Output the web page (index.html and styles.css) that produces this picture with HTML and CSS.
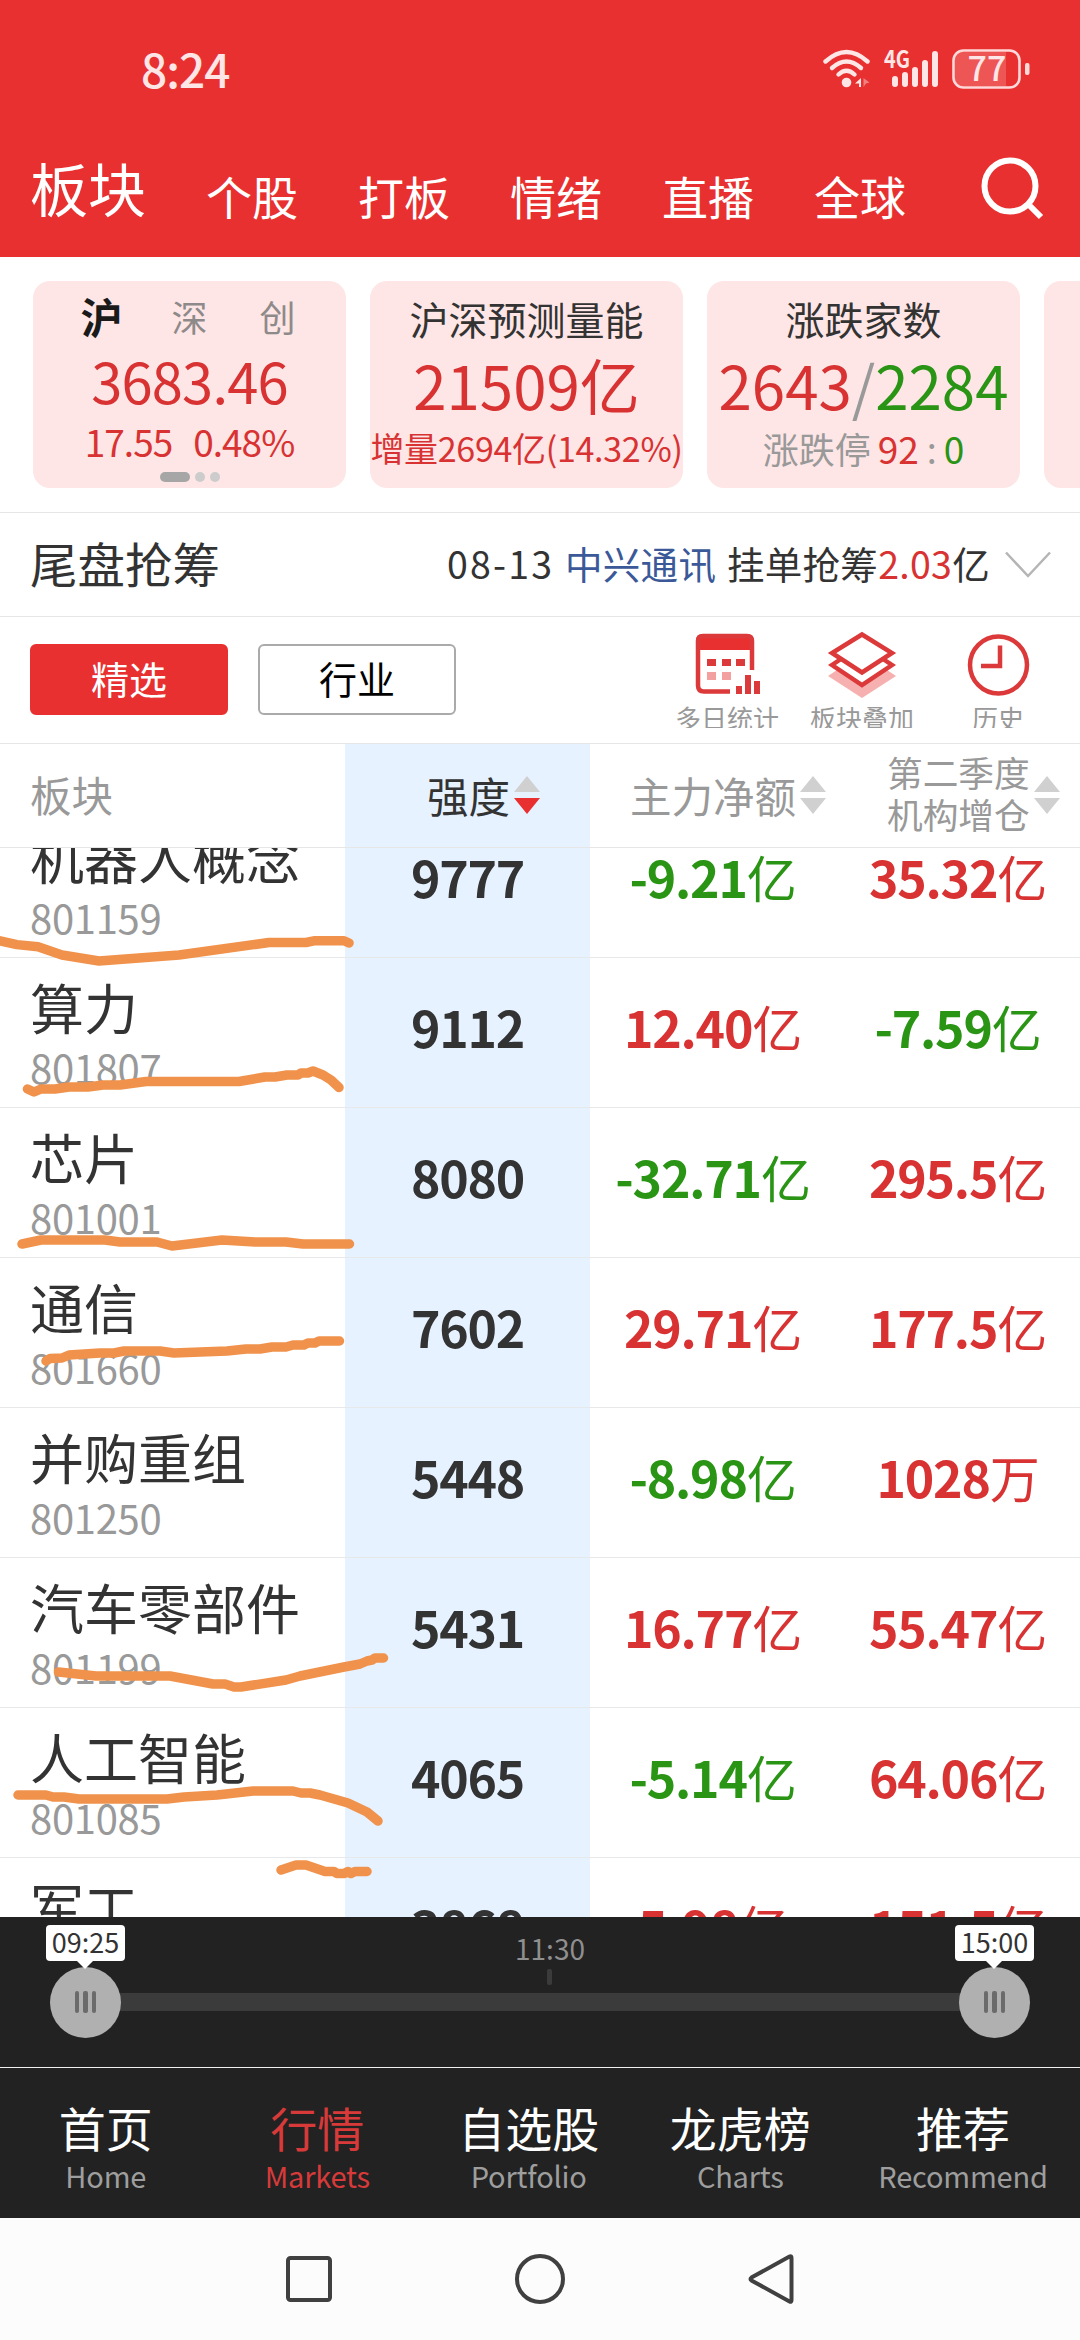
FILE: index.html
```html
<!DOCTYPE html>
<html lang="zh-CN">
<head>
    <meta charset="UTF-8">
    <meta name="viewport" content="width=device-width, initial-scale=1.0">
    <title>板块</title>
    <link rel="stylesheet" href="styles.css">
</head>
<body>
    <div class="header">
        <div class="status">
            <span class="time">8:24</span>
            <svg class="wifi" width="50" height="40" viewBox="0 0 50 40">
                <g fill="none" stroke="#ffe6e6" stroke-width="4.4" stroke-linecap="round">
                    <path d="M3.500 12.500Q24.500-6.500 45.500 12.500"/>
                    <path d="M10 19Q24.500 6 39 19"/>
                    <path d="M16.500 25.500Q24.500 18 32.500 25.500"/>
                </g>
                <circle cx="24.500" cy="33.500" r="4.800" fill="#ffe6e6"/>
                <path d="M39 29v9h-2v-3.500h-4z" fill="#ffe6e6"/>
                <path d="M41.500 29l6 4.500-3.500 1-2.500 3.500z" fill="#f08080"/>
            </svg>
            <svg class="signal" width="56" height="40" viewBox="0 0 56 40">
                <text x="0" y="19" class="net" textLength="26" lengthAdjust="spacingAndGlyphs">4G</text>
                <g stroke="#ffe6e6" stroke-width="6" stroke-linecap="round">
                    <path d="M11 30v5M21 26v9M31 21v14M41 14v21M51 5v30"/>
                </g>
            </svg>
            <svg class="battery" width="79" height="40" viewBox="0 0 79 40">
                <path d="M10 3h44v34H10q-7 0-7-7V10q0-7 7-7z" fill="#ee5656"/>
                <rect x="1.500" y="1.500" width="66" height="37" rx="10" fill="none" stroke="#ffd9d9" stroke-width="2.600"/>
                <rect x="73" y="14" width="4.500" height="12" rx="2" fill="#ffd9d9"/>
                <text x="35" y="32" class="level">77</text>
            </svg>
        </div>
        <div class="tabs">
            <span class="tab active">板块</span>
            <span class="tab">个股</span>
            <span class="tab">打板</span>
            <span class="tab">情绪</span>
            <span class="tab">直播</span>
            <span class="tab">全球</span>
            <svg class="search" width="64" height="64" viewBox="0 0 64 64" fill="none" stroke="#fff" stroke-width="6">
                <circle cx="29" cy="29" r="25.500"/>
                <path d="M47 47l13 13"/>
            </svg>
        </div>
    </div>

    <div class="cards">
        <div class="card">
            <div class="markets"><b>沪</b><span>深</span><span>创</span></div>
            <div class="index red">3683.46</div>
            <div class="change red"><span>17.55</span><span>0.48%</span></div>
            <div class="dots"><i class="on"></i><i></i><i></i></div>
        </div>
        <div class="card">
            <div class="title">沪深预测量能</div>
            <div class="big red">21509亿</div>
            <div class="sub red">增量2694亿(14.32%)</div>
        </div>
        <div class="card">
            <div class="title">涨跌家数</div>
            <div class="big"><span class="red">2643</span><span class="slash">/</span><span class="green">2284</span></div>
            <div class="limit">涨跌停<b class="red">92</b><i>:</i><b class="green">0</b></div>
        </div>
        <div class="card"></div>
    </div>

    <div class="news">
        <span class="news-title">尾盘抢筹</span>
        <span class="news-text"><span class="date">08-13</span> <span class="blue">中兴通讯</span> 挂单抢筹<span class="red">2.03</span>亿</span>
        <svg width="46" height="28" viewBox="0 0 46 28" fill="none" stroke="#b5b5b5" stroke-width="2.500">
            <path d="M1 1.500l22 23.500 22-23.500"/>
        </svg>
    </div>

    <div class="tools">
        <button class="btn primary">精选</button>
        <button class="btn">行业</button>
        <div class="tool first">
            <svg width="66" height="66" viewBox="0 0 66 66">
                <path d="M2 18V9q0-7 7-7h44q6 0 6 7v9z" fill="#e83030"/>
                <path d="M36 59.500H10q-6 0-6-6V9q0-5 5-5h44q5 0 5 5v29" fill="none" stroke="#dc3a3a" stroke-width="4.500"/>
                <path d="M13 27h9v7h-9zM28 27h9v7h-9zM42 27h9v7h-9zM42 54h6v8h-6zM51 43h6v19h-6zM60 49h6v13h-6z" fill="#dc3a3a"/>
                <path d="M13 40h9v8h-9zM28 40h9v8h-9z" fill="#f2a0a0"/>
            </svg>
            <span>多日统计</span>
        </div>
        <div class="tool second">
            <svg width="70" height="68" viewBox="0 0 70 68">
                <path d="M1 45l12-8 22 15 22-15 12 8-34 22z" fill="#f7b0b0"/>
                <g stroke="#dc3a3a" stroke-width="4.500" fill="#fff">
                    <path d="M14 28L5 34l30 20 30-20-9-6"/>
                    <path d="M35 3.500L65 22 35 41.500 5 22z"/>
                </g>
            </svg>
            <span>板块叠加</span>
        </div>
        <div class="tool third">
            <svg width="66" height="66" viewBox="0 0 66 66" fill="none" stroke="#dc3a3a" stroke-width="4.500">
                <circle cx="33.500" cy="33" r="28.500"/>
                <path d="M35 13.500v20.500H16"/>
            </svg>
            <span>历史</span>
        </div>
    </div>

    <div class="thead">
        <div class="c1">板块</div>
        <div class="c2">强度<span class="sort desc"><i class="up"></i><i class="down"></i></span></div>
        <div class="c3">主力净额<span class="sort"><i class="up"></i><i class="down"></i></span></div>
        <div class="c4"><span class="two">第二季度<br>机构增仓</span><span class="sort"><i class="up"></i><i class="down"></i></span></div>
    </div>

    <div class="list">
        <div class="row">
            <div class="name">机器人概念<small>801159</small></div>
            <div class="strength">9777</div>
            <div class="num green">-9.21<em>亿</em></div>
            <div class="num red">35.32<em>亿</em></div>
        </div>
        <div class="row">
            <div class="name">算力<small>801807</small></div>
            <div class="strength">9112</div>
            <div class="num red">12.40<em>亿</em></div>
            <div class="num green">-7.59<em>亿</em></div>
        </div>
        <div class="row">
            <div class="name">芯片<small>801001</small></div>
            <div class="strength">8080</div>
            <div class="num green">-32.71<em>亿</em></div>
            <div class="num red">295.5<em>亿</em></div>
        </div>
        <div class="row">
            <div class="name">通信<small>801660</small></div>
            <div class="strength">7602</div>
            <div class="num red">29.71<em>亿</em></div>
            <div class="num red">177.5<em>亿</em></div>
        </div>
        <div class="row">
            <div class="name">并购重组<small>801250</small></div>
            <div class="strength">5448</div>
            <div class="num green">-8.98<em>亿</em></div>
            <div class="num red">1028<em>万</em></div>
        </div>
        <div class="row">
            <div class="name">汽车零部件<small>801199</small></div>
            <div class="strength">5431</div>
            <div class="num red">16.77<em>亿</em></div>
            <div class="num red">55.47<em>亿</em></div>
        </div>
        <div class="row">
            <div class="name">人工智能<small>801085</small></div>
            <div class="strength">4065</div>
            <div class="num green">-5.14<em>亿</em></div>
            <div class="num red">64.06<em>亿</em></div>
        </div>
        <div class="row">
            <div class="name">军工</div>
            <div class="strength">3868</div>
            <div class="num red">5.98<em>亿</em></div>
            <div class="num red">151.5<em>亿</em></div>
        </div>
        <!-- marker strokes over the rows -->
        <svg class="marks" width="1080" height="1069" viewBox="0 848 1080 1069">
            <polyline points="-4,940 17,944.600 38,946.800 62,955 99,961 179,955 269,942.500 306,942.500 315,940.700 344,940.700 349,943"/>
            <polyline points="27.500,1089 34,1092 41,1089 55,1089 69,1087 88,1087 103,1085 120,1085 146,1081.500 239,1081.500 265,1077 275,1077 287,1075 298,1075 301,1073 308,1073 313,1071 323,1075 331,1080 339,1087.500"/>
            <polyline points="22,1244 41,1240 105,1240 120,1242 157,1242 172,1246 222,1240 255,1242 286,1242 303,1244 349.500,1244"/>
            <polyline points="46,1361 50,1358.500 62,1358 69,1355 100,1353 114,1353 124,1351 160,1351 174,1353 227,1351 246,1349 260,1349 272,1347 286,1347 293,1345 304,1345 308,1343 315,1343 319,1341 339.500,1341"/>
            <polyline points="58.500,1672 96,1676 170,1676 213,1684 225,1684 234,1687 241,1687 286,1680 300,1676 344,1667 360,1664 367,1661 372,1660 375,1658 383.500,1658"/>
            <polyline points="18,1795 46,1795 53,1797 64,1797 79,1799 167,1799 184,1797 217,1795 253,1791 293,1791 301,1793 310,1793 320,1795 348,1803 367,1812 378,1821"/>
            <polyline points="281,1870 296,1865 306,1865 325,1871.500 334,1871.500 337,1873.500 344,1873.500 348,1871.500 351,1873.500 355,1871.500 367,1871.500"/>
        </svg>
    </div>

    <div class="slider">
        <div class="mid">11:30</div>
        <div class="tick"></div>
        <div class="track">
            <div class="knob left"><span class="tip">09:25</span><i></i><i></i><i></i></div>
            <div class="knob right"><span class="tip">15:00</span><i></i><i></i><i></i></div>
        </div>
    </div>

    <div class="tabbar">
        <div class="item">首页<small>Home</small></div>
        <div class="item current">行情<small>Markets</small></div>
        <div class="item">自选股<small>Portfolio</small></div>
        <div class="item">龙虎榜<small>Charts</small></div>
        <div class="item last">推荐<small>Recommend</small></div>
    </div>

    <div class="sysnav">
        <svg width="54" height="54" viewBox="0 0 54 54"><rect x="6" y="6" width="42" height="42" rx="2.500"/></svg>
        <svg width="54" height="54" viewBox="0 0 54 54"><circle cx="27" cy="27" r="23"/></svg>
        <svg width="54" height="54" viewBox="0 0 54 54"><path d="M45.500 4.500q2-1 2 1.500v42q0 2.500-2 1.500L7.500 28.500q-2-1.500 0-3z"/></svg>
    </div>
</body>
</html>
```

FILE: styles.css
```css
* {
    box-sizing: border-box;
}
body {
    margin: 0;
    width: 1080px;
    height: 2340px;
    overflow: hidden;
    background: #fff;
    color: #333;
    font-family: "Noto Sans CJK SC", sans-serif;
}
svg {
    display: block;
    flex: none;
}
i, em {
    font-style: normal;
}
.red { color: #d83232; }
.green { color: #2a9415; }
.blue { color: #3b5998; }

/* header */
.header {
    height: 257px;
    background: #e83030;
    color: #fff;
}
.status {
    display: flex;
    align-items: center;
    height: 138px;
    padding: 0 49px 0 141px;
}
.time {
    flex: 1;
    font-size: 46px;
    line-height: 60px;
    padding-bottom: 3px;
    color: #ffe6e6;
    font-weight: 500;
    letter-spacing: -1px;
}
.signal { margin-left: 12px; }
.battery { margin-left: 12px; }
.net {
    font-size: 24px;
    font-weight: 700;
    fill: #ffe6e6;
}
.level {
    font-size: 34px;
    font-weight: 500;
    fill: #ffe6e6;
    text-anchor: middle;
}
.tabs {
    display: flex;
    align-items: flex-start;
    padding-left: 30px;
}
.tab {
    width: 92px;
    margin: 27px 60px 0 0;
    font-size: 46px;
    line-height: 60px;
    white-space: nowrap;
}
.tab.active {
    width: 116px;
    margin-top: 19px;
    font-size: 58px;
}
.search {
    margin: 19px 0 0 15px;
}

/* summary cards */
.cards {
    display: flex;
    gap: 24px;
    height: 255px;
    padding: 24px 0 0 33px;
    overflow: hidden;
}
.card {
    flex: none;
    width: 313px;
    height: 207px;
    border-radius: 17px;
    background: #fee6e6;
    text-align: center;
    white-space: nowrap;
}
.markets {
    display: flex;
    justify-content: center;
    align-items: center;
    height: 69px;
    color: #8f8a8a;
    font-size: 36px;
}
.markets b, .markets span {
    width: 88px;
}
.markets b {
    font-size: 42px;
    color: #1a1a1a;
}
.index {
    font-size: 56px;
    line-height: 60px;
    letter-spacing: -0.8px;
}
.change {
    display: flex;
    justify-content: center;
    gap: 21px;
    font-size: 37px;
    line-height: 62px;
    letter-spacing: -1px;
}
.dots {
    display: flex;
    justify-content: center;
    gap: 5px;
}
.dots i {
    width: 10px;
    height: 10px;
    border-radius: 5px;
    background: #ccc;
}
.dots .on {
    width: 30px;
    background: #a6a6a6;
}
.title {
    font-size: 39px;
    line-height: 60px;
    padding-top: 7px;
}
.big {
    font-size: 60px;
    line-height: 70px;
    padding-top: 1px;
}
.slash { color: #999; }
.sub {
    font-size: 34px;
    line-height: 58px;
    letter-spacing: -0.3px;
}
.limit {
    font-size: 36px;
    line-height: 58px;
    color: #999;
}
.limit b {
    margin-left: 7px;
    font-weight: 400;
    font-size: 37px;
}
.limit i { margin-left: 8px; }

/* news strip */
.news {
    display: flex;
    align-items: center;
    height: 105px;
    padding: 0 29px 0 30px;
    border-top: 1px solid #e6e6e6;
    border-bottom: 1px solid #e6e6e6;
}
.news-title {
    flex: 1;
    font-size: 47.5px;
    line-height: 60px;
    padding-bottom: 4px;
}
.news-text {
    font-size: 37.5px;
    line-height: 60px;
    padding-bottom: 4px;
    margin-right: 15px;
    word-spacing: 2px;
    letter-spacing: 0.3px;
}
.date {
    letter-spacing: 2.2px;
}

/* filter buttons and tool icons */
.tools {
    display: flex;
    height: 126px;
    padding-left: 30px;
}
.btn {
    width: 198px;
    height: 71px;
    margin: 27px 30px 0 0;
    padding: 0 0 4px;
    border: 2px solid #aaa;
    border-radius: 6px;
    background: #fff;
    color: #000;
    font: 38px/60px "Noto Sans CJK SC", sans-serif;
}
.btn.primary {
    border-color: #e83030;
    background: #e83030;
    color: #fff;
}
.tool {
    display: flex;
    flex-direction: column;
    align-items: center;
    width: 108px;
    height: 111px;
    padding-top: 14px;
    overflow: hidden;
    color: #999;
    font-size: 26px;
    white-space: nowrap;
}
.tool svg { height: 68px; }
.tool span {
    line-height: 38px;
}
.first { margin-left: 187px; }
.second { margin-left: 27px; }
.third { margin-left: 28px; }

/* table header */
.thead {
    display: flex;
    height: 105px;
    border-top: 1px solid #e6e6e6;
    border-bottom: 1px solid #e6e6e6;
    color: #999;
    font-size: 41.5px;
    background: linear-gradient(90deg, #fff 345px, #e6f2ff 345px, #e6f2ff 590px, #fff 590px);
}
.thead > div {
    display: flex;
    align-items: center;
    line-height: 60px;
    padding-bottom: 2px;
}
.thead .c1 {
    width: 345px;
    padding: 0 0 4px 30px;
}
.c2 {
    width: 245px;
    padding-left: 82px;
    color: #333;
}
.c3 {
    width: 245px;
    padding-left: 40px;
}
.c4 {
    width: 245px;
    padding-left: 52px;
}
.thead .two {
    font-size: 35.7px;
    line-height: 42px;
    padding-bottom: 3px;
}
.sort {
    display: flex;
    flex-direction: column;
    gap: 6px;
    margin-left: 4px;
}
.up, .down {
    border: 13px solid transparent;
}
.up {
    border-top: 0;
    border-bottom: 16px solid #d0d0d0;
}
.down {
    border-bottom: 0;
    border-top: 16px solid #d0d0d0;
}
.desc .down { border-top-color: #e83030; }

/* sector list */
.list {
    position: relative;
    height: 1069px;
    overflow: hidden;
    background: linear-gradient(90deg, #fff 345px, #e6f2ff 345px, #e6f2ff 590px, #fff 590px);
}
.row {
    display: flex;
    height: 150px;
    border-bottom: 1px solid #e6e8ea;
}
.row:first-child { margin-top: -40px; }
.name {
    width: 345px;
    padding: 19px 0 0 30px;
    font-size: 54px;
    line-height: 60px;
}
.name small {
    display: block;
    margin-top: 10px;
    font-size: 40px;
    line-height: 40px;
    color: #999;
    letter-spacing: -0.3px;
}
.strength, .num {
    width: 245px;
    padding-top: 38px;
    font-size: 50px;
    line-height: 60px;
    font-weight: 700;
    letter-spacing: -1.2px;
    text-align: center;
}
.num em {
    font-weight: 400;
}
.marks {
    position: absolute;
    left: 0;
    top: 0;
    fill: none;
    stroke: #f0924b;
    stroke-width: 9.5;
    stroke-linecap: round;
    stroke-linejoin: round;
}

/* time slider */
.slider {
    height: 150px;
    background: #222;
    padding-top: 12px;
}
.mid {
    height: 40px;
    padding-left: 20px;
    font-size: 28px;
    line-height: 39px;
    color: #8f8f8f;
    text-align: center;
}
.tick {
    width: 5px;
    height: 16px;
    margin-left: 547px;
    border-radius: 2px;
    background: #3b3b3b;
}
.track {
    display: flex;
    justify-content: space-between;
    align-items: center;
    height: 18px;
    margin: 8px 50px 0 50px;
    background: linear-gradient(#3b3b3b, #3b3b3b) center / 900px 100% no-repeat;
}
.knob {
    position: relative;
    display: flex;
    justify-content: center;
    align-items: center;
    gap: 4px;
    width: 71px;
    height: 71px;
    border-radius: 50%;
    background: #b0b0b0;
}
.knob i {
    width: 4.5px;
    height: 22px;
    border-radius: 2px;
    background: #6b6b6b;
}
.tip {
    position: absolute;
    left: -4px;
    top: -42px;
    width: 79px;
    height: 36px;
    border-radius: 4px;
    background: #fff;
    color: #333;
    font-size: 27px;
    line-height: 34px;
    text-align: center;
}
.tip::after {
    content: "";
    position: absolute;
    left: 30px;
    top: 35px;
    border: 9.5px solid transparent;
    border-top-color: #fff;
    border-bottom: 0;
}

/* bottom tabs */
.tabbar {
    display: flex;
    height: 151px;
    border-top: 1px solid #f0f0f0;
    background: #222;
    color: #fff;
}
.item {
    width: 211.5px;
    padding-top: 28px;
    font-size: 47px;
    line-height: 62px;
    text-align: center;
}
.item small {
    display: block;
    font-size: 29px;
    line-height: 35px;
    letter-spacing: -0.2px;
    color: #9e9e9e;
}
.item.current, .current small { color: #d83a3a; }
.last { width: 234px; }

/* system navigation */
.sysnav {
    display: flex;
    justify-content: center;
    gap: 177px;
    height: 122px;
    padding-top: 34px;
    background: #fcfcfc;
}
.sysnav svg {
    fill: none;
    stroke: #404040;
    stroke-width: 4;
}
```
